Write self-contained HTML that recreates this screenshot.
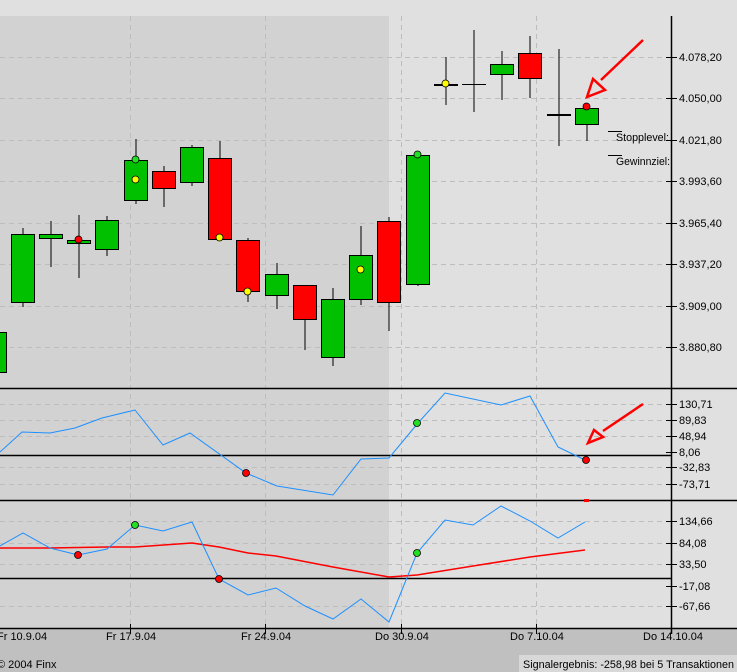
<!DOCTYPE html>
<html><head><meta charset="utf-8"><style>
html,body{margin:0;padding:0;width:737px;height:672px;overflow:hidden;background:#e0e0e0}
svg{display:block}
text{font-family:"Liberation Sans",sans-serif;font-size:11px;fill:#000}
</style></head><body>
<svg width="737" height="672" viewBox="0 0 737 672" xmlns="http://www.w3.org/2000/svg">
<rect x="0" y="0" width="737" height="672" fill="#e0e0e0"/>
<rect x="0" y="16" width="389" height="612" fill="#d2d2d2"/>
<rect x="0" y="628" width="737" height="44" fill="#c0c0c0"/>
<rect x="519" y="655" width="218" height="17" fill="#d8d8d8"/>
<g stroke="#bdbdbd" stroke-dasharray="5,4" stroke-width="1">
<line x1="0" y1="57.5" x2="671" y2="57.5"/><line x1="0" y1="98.5" x2="671" y2="98.5"/>
<line x1="0" y1="140.5" x2="671" y2="140.5"/><line x1="0" y1="181.5" x2="671" y2="181.5"/>
<line x1="0" y1="223.5" x2="671" y2="223.5"/><line x1="0" y1="264.5" x2="671" y2="264.5"/>
<line x1="0" y1="306.5" x2="671" y2="306.5"/><line x1="0" y1="347.5" x2="671" y2="347.5"/>
<line x1="0" y1="404.5" x2="671" y2="404.5"/><line x1="0" y1="420.5" x2="671" y2="420.5"/>
<line x1="0" y1="436.5" x2="671" y2="436.5"/><line x1="0" y1="467.5" x2="671" y2="467.5"/>
<line x1="0" y1="484.5" x2="671" y2="484.5"/>
<line x1="0" y1="521.5" x2="671" y2="521.5"/><line x1="0" y1="543.5" x2="671" y2="543.5"/>
<line x1="0" y1="564.5" x2="671" y2="564.5"/><line x1="0" y1="606.5" x2="671" y2="606.5"/>
<line x1="130.5" y1="16" x2="130.5" y2="628"/><line x1="265.5" y1="16" x2="265.5" y2="628"/>
<line x1="401.5" y1="16" x2="401.5" y2="628"/><line x1="536.5" y1="16" x2="536.5" y2="628"/>
</g>
<g stroke="#000" stroke-width="1.5">
<line x1="0" y1="388.5" x2="737" y2="388.5"/>
<line x1="0" y1="500.5" x2="737" y2="500.5"/>
<line x1="0" y1="455.5" x2="671" y2="455.5"/>
<line x1="0" y1="578.5" x2="671" y2="578.5"/>
<line x1="0" y1="628.5" x2="737" y2="628.5"/>
<line x1="671.5" y1="16" x2="671.5" y2="634"/>
</g>
<g stroke="#000" stroke-width="1">
<line x1="666" y1="57.5" x2="677" y2="57.5"/><line x1="666" y1="98.5" x2="677" y2="98.5"/>
<line x1="666" y1="140.5" x2="677" y2="140.5"/><line x1="666" y1="181.5" x2="677" y2="181.5"/>
<line x1="666" y1="223.5" x2="677" y2="223.5"/><line x1="666" y1="264.5" x2="677" y2="264.5"/>
<line x1="666" y1="306.5" x2="677" y2="306.5"/><line x1="666" y1="347.5" x2="677" y2="347.5"/>
<line x1="666" y1="404.5" x2="677" y2="404.5"/><line x1="666" y1="420.5" x2="677" y2="420.5"/>
<line x1="666" y1="436.5" x2="677" y2="436.5"/><line x1="666" y1="452.5" x2="677" y2="452.5"/>
<line x1="666" y1="467.5" x2="677" y2="467.5"/><line x1="666" y1="484.5" x2="677" y2="484.5"/>
<line x1="666" y1="521.5" x2="677" y2="521.5"/><line x1="666" y1="543.5" x2="677" y2="543.5"/>
<line x1="666" y1="564.5" x2="677" y2="564.5"/><line x1="666" y1="586.5" x2="677" y2="586.5"/>
<line x1="666" y1="606.5" x2="677" y2="606.5"/>
<line x1="130.5" y1="624" x2="130.5" y2="634"/><line x1="265.5" y1="624" x2="265.5" y2="634"/>
<line x1="401.5" y1="624" x2="401.5" y2="634"/><line x1="536.5" y1="624" x2="536.5" y2="634"/>
</g>
<g>
<text x="679" y="61">4.078,20</text><text x="679" y="102">4.050,00</text>
<text x="679" y="144">4.021,80</text><text x="679" y="185">3.993,60</text>
<text x="679" y="227">3.965,40</text><text x="679" y="268">3.937,20</text>
<text x="679" y="310">3.909,00</text><text x="679" y="351">3.880,80</text>
<text x="679" y="408">130,71</text><text x="679" y="424">89,83</text>
<text x="679" y="440">48,94</text><text x="679" y="456">8,06</text>
<text x="679" y="471">-32,83</text><text x="679" y="488">-73,71</text>
<text x="679" y="525">134,66</text><text x="679" y="547">84,08</text>
<text x="679" y="568">33,50</text><text x="679" y="590">-17,08</text>
<text x="679" y="610">-67,66</text>
<text x="-3" y="640">Fr 10.9.04</text><text x="106" y="640">Fr 17.9.04</text>
<text x="241" y="640">Fr 24.9.04</text><text x="375" y="640">Do 30.9.04</text>
<text x="510" y="640">Do 7.10.04</text><text x="643" y="640">Do 14.10.04</text>
<text x="-3" y="668">© 2004 Finx</text>
<text x="523" y="668" textLength="211" lengthAdjust="spacingAndGlyphs">Signalergebnis: -258,98 bei 5 Transaktionen</text>
<text x="616" y="141" textLength="53" lengthAdjust="spacingAndGlyphs">Stopplevel:</text>
<text x="616" y="165" textLength="54" lengthAdjust="spacingAndGlyphs">Gewinnziel:</text>
</g>
<g stroke="#000" stroke-width="1"><line x1="608" y1="131.5" x2="622" y2="131.5"/><line x1="608" y1="155.5" x2="622" y2="155.5"/></g>
<g stroke="#000" stroke-width="1">
<line x1="23" y1="228" x2="23" y2="307"/><line x1="51" y1="221" x2="51" y2="267"/>
<line x1="79" y1="215" x2="79" y2="278"/><line x1="107" y1="216" x2="107" y2="256"/>
<line x1="136" y1="139" x2="136" y2="204"/><line x1="164" y1="166" x2="164" y2="207"/>
<line x1="192" y1="145" x2="192" y2="186"/><line x1="220" y1="141" x2="220" y2="240"/>
<line x1="248" y1="238" x2="248" y2="302"/><line x1="277" y1="263" x2="277" y2="309"/>
<line x1="305" y1="285" x2="305" y2="350"/><line x1="333" y1="288" x2="333" y2="366"/>
<line x1="361" y1="226" x2="361" y2="305"/><line x1="389" y1="217" x2="389" y2="331"/>
<line x1="418" y1="152" x2="418" y2="286"/>
<line x1="446" y1="57" x2="446" y2="105"/><line x1="474" y1="30" x2="474" y2="112"/>
<line x1="502" y1="51" x2="502" y2="100"/><line x1="530" y1="36" x2="530" y2="98"/>
<line x1="559" y1="49" x2="559" y2="146"/><line x1="587" y1="108" x2="587" y2="141"/>
<line x1="462" y1="84.5" x2="486" y2="84.5"/>
</g>
<g stroke="#000" stroke-width="1">
<rect x="-5.5" y="332.5" width="12" height="40" fill="#00c000"/>
<rect x="11.5" y="234.5" width="23" height="68" fill="#00c000"/>
<rect x="39.5" y="234.5" width="23" height="4" fill="#00c000"/>
<rect x="67.5" y="240.5" width="23" height="3" fill="#00c000"/>
<rect x="95.5" y="220.5" width="23" height="29" fill="#00c000"/>
<rect x="124.5" y="160.5" width="23" height="40" fill="#00c000"/>
<rect x="152.5" y="171.5" width="23" height="17" fill="#ff0000"/>
<rect x="180.5" y="147.5" width="23" height="35" fill="#00c000"/>
<rect x="208.5" y="158.5" width="23" height="81" fill="#ff0000"/>
<rect x="236.5" y="240.5" width="23" height="51" fill="#ff0000"/>
<rect x="265.5" y="274.5" width="23" height="21" fill="#00c000"/>
<rect x="293.5" y="285.5" width="23" height="34" fill="#ff0000"/>
<rect x="321.5" y="299.5" width="23" height="58" fill="#00c000"/>
<rect x="349.5" y="255.5" width="23" height="44" fill="#00c000"/>
<rect x="377.5" y="221.5" width="23" height="81" fill="#ff0000"/>
<rect x="406.5" y="155.5" width="23" height="129" fill="#00c000"/>
<rect x="490.5" y="64.5" width="23" height="10" fill="#00c000"/>
<rect x="518.5" y="53.5" width="23" height="25" fill="#ff0000"/>
<rect x="575.5" y="108.5" width="23" height="16" fill="#00c000"/>
</g>
<g fill="#000"><rect x="434" y="84" width="24" height="2"/><rect x="547" y="114" width="24" height="2"/></g>
<g stroke="#000" stroke-width="0.8">
<circle cx="78.5" cy="239.5" r="3.5" fill="#ff0000"/>
<circle cx="135.5" cy="159.5" r="3.5" fill="#22e022"/>
<circle cx="135.5" cy="179.5" r="3.5" fill="#ffff00"/>
<circle cx="219.5" cy="237.5" r="3.5" fill="#ffff00"/>
<circle cx="247.5" cy="291.5" r="3.5" fill="#ffff00"/>
<circle cx="360.5" cy="269.5" r="3.5" fill="#ffff00"/>
<circle cx="417.5" cy="154.5" r="3.5" fill="#22e022"/>
<circle cx="445.5" cy="83.5" r="3.5" fill="#ffff00"/>
<circle cx="586.5" cy="106.5" r="3.5" fill="#ff0000"/>
</g>
<g stroke="#ff0000" stroke-width="2.5" fill="none">
<line x1="643" y1="40" x2="601" y2="80"/>
<polygon points="587,97 593,79 605,90"/>
<line x1="643" y1="404" x2="603" y2="431"/>
<polygon points="588,443 594,430 603,437"/>
</g>
<polyline fill="none" stroke="#1e90ff" stroke-width="1" points="0,452 22,432 50,433 75,428 102,418 135,410 163,445 190,433 246,473 277,486 333,495 361,459 389,458 418,423 445,393 501,405 530,396 558,447 585,460"/>
<g stroke="#000" stroke-width="0.8">
<circle cx="417" cy="423" r="3.5" fill="#22e022"/>
<circle cx="246" cy="473" r="3.5" fill="#ff0000"/>
<circle cx="586" cy="460" r="3.5" fill="#ff0000"/>
</g>
<rect x="584" y="499" width="5" height="3" fill="#ff0000"/>
<polyline fill="none" stroke="#ff0000" stroke-width="1.5" points="0,548 50,548 107,547 135,547 192,543 219,547 248,553 276,556 333,567 389,577 417,575 473,566 530,557 585,550"/>
<polyline fill="none" stroke="#1e90ff" stroke-width="1" points="0,546 23,533 50,548 78,555 107,549 135,525 163,531 192,522 219,579 248,595 276,588 305,606 333,619 361,599 389,622 417,553 445,520 473,525 501,506 530,521 558,538 585,522"/>
<g stroke="#000" stroke-width="0.8">
<circle cx="135" cy="525" r="3.5" fill="#22e022"/>
<circle cx="417" cy="553" r="3.5" fill="#22e022"/>
<circle cx="78" cy="555" r="3.5" fill="#ff0000"/>
<circle cx="219" cy="579" r="3.5" fill="#ff0000"/>
</g>
</svg>
</body></html>
